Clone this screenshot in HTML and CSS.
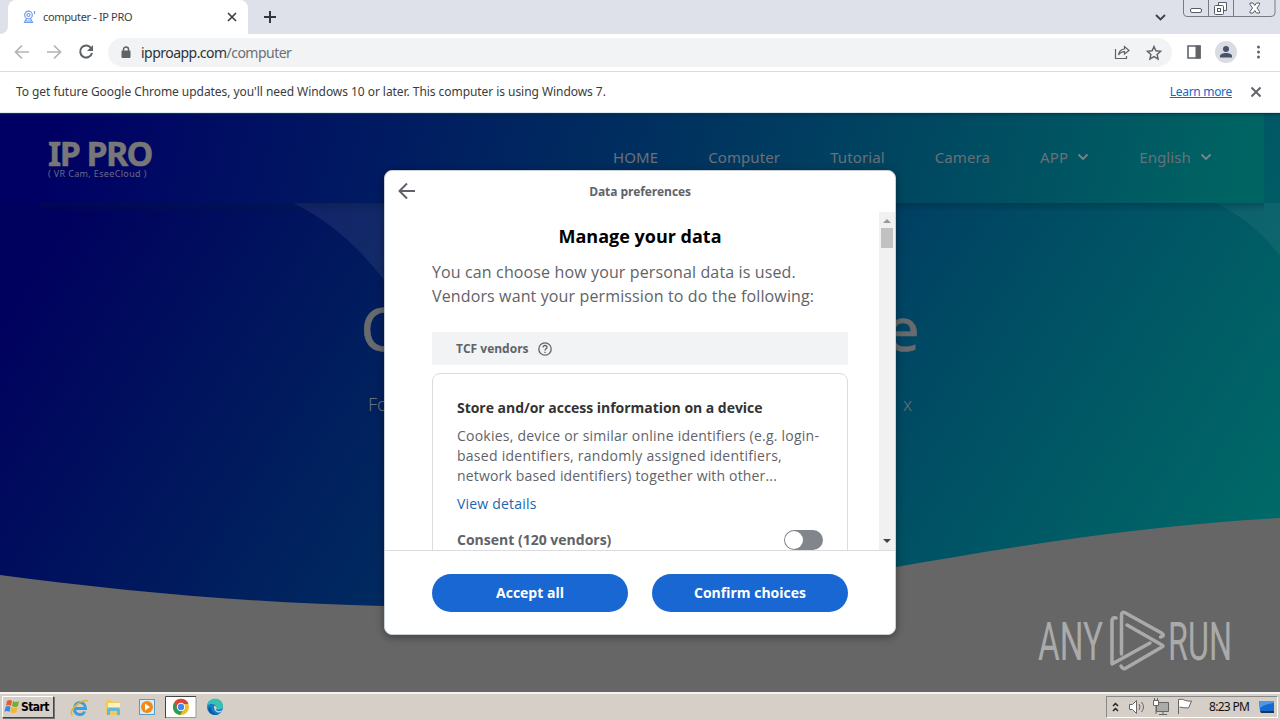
FILE: index.html
```html
<!DOCTYPE html>
<html lang="en">
<head>
<meta charset="utf-8">
<title>computer - IP PRO</title>
<link rel="stylesheet" href="styles.css">
</head>
<body>
<div class="desktop">
  <header class="tabstrip">
    <div class="strip-edge"></div>
    <div class="tab">
      <svg class="favicon" width="14" height="14" viewBox="0 0 14 14" fill="none" stroke="#6f9bea" stroke-width="1.2"><circle cx="6.500" cy="5" r="3.800"/><circle cx="6.500" cy="5" r="1.500"/><path d="M4.500 8.500 2.500 12.500h8L8.500 8.500M4 11h5M12.500 1v3"/></svg>
      <span class="tab-title">computer - IP PRO</span>
      <svg class="tab-close" width="10" height="10" viewBox="0 0 10 10" stroke="#3c4043" stroke-width="1.700"><path d="M1 1l8 8M9 1L1 9"/></svg>
    </div>
    <svg class="new-tab" width="12" height="12" viewBox="0 0 12 12" stroke="#33363a" stroke-width="2"><path d="M6 0v12M0 6h12"/></svg>
    <svg class="tab-search" width="11" height="7" viewBox="0 0 11 7" fill="none" stroke="#3c4043" stroke-width="1.800"><path d="M1 1l4.500 4.500L10 1"/></svg>
    <svg class="window-buttons" width="94" height="18" viewBox="0 0 94 18" fill="none" stroke="#777b85"><path d="M.5 0v13q0 3.500 3.500 3.500h84q4 0 4-3.500V0M25.500 0v16M50.500 0v16"/><g stroke="#555a64"><rect x="7.500" y="8.500" width="11" height="4" rx="1.500" fill="#fff"/><path d="M35.500 5V2.500h8v8H41" fill="#fff"/><rect x="31.500" y="5.500" width="9" height="9" rx="1" fill="#fff"/><rect x="34.500" y="8.500" width="3" height="3"/><path d="M67 3h3l1.800 2.500L73.500 3h3v1.500L74 8l2.500 3.500V13h-3l-1.700-2.500L70 13h-3v-1.500L69.500 8 67 4.500z" fill="#fff"/></g></svg>
  </header>
  <nav class="toolbar">
    <svg class="nav-icons" width="108" height="34" viewBox="0 0 108 34" fill="none" stroke="#b2b4b6" stroke-width="1.700"><path d="M29 18H16M22 11.500 15.500 18l6.500 6.500M47 18h13M54 11.500l6.500 6.500-6.500 6.500"/><path d="M91.200 14.200A6 6 0 1 0 92 19" stroke="#5f6368" stroke-width="2"/><path d="M93 11v6h-6z" fill="#5f6368" stroke="none"/></svg>
    <div class="omnibox">
      <svg width="10" height="13" viewBox="0 0 10 13"><path d="M2.500 5V3.500a2.500 2.500 0 0 1 5 0V5" fill="none" stroke="#5f6368" stroke-width="1.500"/><rect x=".5" y="4.500" width="9" height="7.500" rx="1" fill="#5f6368"/></svg>
      <span class="url">ipproapp.com<span class="url-path">/computer</span></span>
      <svg class="share" width="17" height="16" viewBox="0 0 17 16" fill="none" stroke="#5f6368" stroke-width="1.200"><path d="M1.500 5v9.500h11V12M4.500 11c.6-4 2.500-5.800 6-6V2.500L15 6.500 10.500 10V7.700C8 7.700 6 8.500 4.500 11z"/></svg>
      <svg width="16" height="16" viewBox="0 0 16 16" fill="none" stroke="#5f6368" stroke-width="1.400"><path d="m8 1.500 1.900 4.300 4.700.5-3.500 3.100 1 4.600L8 11.600 3.900 14l1-4.600L1.400 6.300l4.700-.5z"/></svg>
    </div>
    <svg class="panel-icons" width="108" height="34" viewBox="0 0 108 34"><path d="M16 12h12v12H16z" fill="none" stroke="#5f6368" stroke-width="1.600"/><path d="M23.500 11.500h5v13h-5z" fill="#5f6368"/><circle cx="54" cy="18" r="11" fill="#d9dce1"/><circle cx="54" cy="15" r="3" fill="#47536b"/><path d="M48 23.500V22c0-4 12-4 12 0v1.500z" fill="#47536b"/><g fill="#5f6368"><circle cx="86.500" cy="13" r="1.500"/><circle cx="86.500" cy="18" r="1.500"/><circle cx="86.500" cy="23" r="1.500"/></g></svg>
  </nav>
  <div class="infobar">
    <span class="info-text">To get future Google Chrome updates, you'll need Windows 10 or later. This computer is using Windows 7.</span>
    <a class="info-link">Learn more</a>
    <svg class="info-close" width="12" height="12" viewBox="0 0 12 12" stroke="#5f6368" stroke-width="1.900"><path d="M1.500 1.500l9 9M10.500 1.500l-9 9"/></svg>
  </div>

  <main class="page">
    <svg class="backdrop" width="1280" height="580" viewBox="0 113 1280 580">
      <defs>
        <linearGradient id="sea" gradientUnits="userSpaceOnUse" x1="60" y1="210" x2="1059" y2="834"><stop offset="0" stop-color="#00005e"/><stop offset=".25" stop-color="#001b5d"/><stop offset=".5" stop-color="#003462"/><stop offset=".75" stop-color="#005064"/><stop offset="1" stop-color="#006867"/></linearGradient>
        <linearGradient id="bar" gradientUnits="userSpaceOnUse" x1="60" y1="113" x2="1180" y2="400"><stop offset="0" stop-color="#000064"/><stop offset=".5" stop-color="#00305f"/><stop offset="1" stop-color="#006463"/></linearGradient>
        <linearGradient id="shade" x1="0" y1="0" x2="0" y2="1"><stop offset="0" stop-color="#002030" stop-opacity=".3"/><stop offset="1" stop-color="#002030" stop-opacity="0"/></linearGradient>
      </defs>
      <rect y="113" width="1280" height="580" fill="#666"/>
      <path d="M0 113H1280V518C1150 525 1020 545 896 567C760 590 590 610 384 606C250 603 120 591 0 575z" fill="url(#sea)"/>
      <path d="M293 203C328 220 358 246 384 280V203z" fill="#fff" fill-opacity=".07"/>
      <path d="M1216 203C1240 215 1262 232 1280 256V203z" fill="#fff" fill-opacity=".05"/>
      <rect y="113" width="1264" height="90" fill="url(#bar)"/>
      <rect x="40" y="203" width="1224" height="9" fill="url(#shade)"/>
      <rect y="113" width="1280" height="5" fill="url(#shade)"/>
      <path d="M0 113.500h1280" stroke="#203040"/>
    </svg>
    <div class="page-content">
      <div class="site-header">
        <div class="brand"><b class="brand-name">IP PRO</b><span class="brand-sub">( VR Cam, EseeCloud )</span></div>
        <div class="menu">
          <span>HOME</span><span>Computer</span><span>Tutorial</span><span>Camera</span>
          <span>APP<svg width="12" height="8" viewBox="0 0 12 8"><path d="M1.500 1.500 6 6l4.500-4.500"/></svg></span>
          <span>English<svg width="12" height="8" viewBox="0 0 12 8"><path d="M1.500 1.500 6 6l4.500-4.500"/></svg></span>
        </div>
      </div>
      <h1 class="hero-title">Computer Software</h1>
      <p class="hero-sub">For Windows 7 or later, and for computers running on Mac os x</p>
    </div>
    <svg class="watermark" width="210" height="84" viewBox="1030 600 210 84"><g class="mark-text"><text x="1038" y="660" textLength="65" lengthAdjust="spacingAndGlyphs">ANY</text><text x="1168" y="660" textLength="64" lengthAdjust="spacingAndGlyphs">RUN</text></g><g fill="none" stroke="#aaa" stroke-width="3.500" stroke-linecap="round" stroke-linejoin="round"><path d="M1116 618q-4-1-4 3v43l38-21M1121.500 654V615q0-4 4-2l36 20q4 3-1 4M1127 625l35 20q2 1 0 2l-36 21q-3 2-5-2"/></g></svg>
  </main>

  <footer class="taskbar">
    <div class="start"><svg width="17" height="16" viewBox="0 0 17 16"><path d="M3 2q3-2 5 0L7 7Q4 5 2 7z" fill="#e85a2a"/><path d="M9 2q3 2 6 0l-1 5q-3 2-6 0z" fill="#72ad35"/><path d="M1.500 8q3-2 5 0l-1 5q-3-2-5 0z" fill="#388bd8"/><path d="M7.500 8q3 2 6 0l-1 5q-3 2-6 0z" fill="#f4b72a"/></svg><b>Start</b></div>
    <svg class="launchers" width="176" height="24" viewBox="54 695 176 24">
      <path d="M74.500 708.500h11c0-8-11-8-11 0s9 7 10 3" fill="none" stroke="#3b9fdd" stroke-width="3"/><path d="M73 715c-7-1 8-18 15-14" fill="none" stroke="#e3b52c" stroke-width="1.500"/>
      <path d="M106 700h5l1 2h8v13h-14z" fill="#edc964"/><path d="M108 703h12v4h-12z" fill="#fff2b5"/><path d="M107 715v-5q0-2 2-2h9q2 0 2 2v5h-3v-4h-7v4z" fill="#66b8d8"/>
      <rect x="139.500" y="699.500" width="15" height="15" fill="#d8ebf7" stroke="#5a9bc5"/><circle cx="147" cy="707" r="6" fill="#f18a18"/><path d="M145 703.500v7l5-3.500z" fill="#fff"/>
      <path d="M165 696h31v22h-31z" fill="#fff"/><path d="M165.500 718v-21.500H196" fill="none" stroke="#444"/><path d="M196 697v20.500h-30" fill="none" stroke="#999"/>
      <circle cx="181" cy="707" r="8" fill="#eabf29"/><path d="M174 703a8 8 0 0 0 6 12l4-6-3-2z" fill="#2b9c50"/><path d="M174 703a8 8 0 0 1 14.500 1H181l-3 5z" fill="#db4437"/><circle cx="181" cy="707" r="4.200" fill="#fff"/><circle cx="181" cy="707" r="3.200" fill="#4285f4"/>
      <circle cx="215" cy="707" r="8" fill="#147cc8"/><path d="M207 706c1-9 15-10 16 0 0 4-5 4-7 3 2-4-5-7-9-3z" fill="#36c1b2"/><path d="M214 706c3 0 3 2 2 4 2 2 5 1 6.500 0-3 5-9 2-8.500-4z" fill="#d5cfc8"/><path d="M211 707c0 5 4 8 9 6-5 4-12 1-12-5z" fill="#075ca5"/>
    </svg>
    <div class="tray">
      <svg width="92" height="20" viewBox="1107 697 92 20" fill="none" stroke="#222"><path d="m1113 706 2.500-2.500 2.500 2.500M1113 711l2.500-2.500 2.500 2.500" stroke-width="1.500"/><g stroke="#666" fill="#fff"><path d="M1129.500 704.500h3l4-4v13l-4-4h-3z"/><path d="M1139 704q2 3 0 6M1141.500 702q4 5 0 10" fill="none"/><path d="M1156.500 702.500h12v9h-12z" fill="#aaa"/><path d="M1159 714.500h8M1163 712v2"/><path d="M1153.500 700.500h5v5h-5zM1154.500 698v2M1157.500 698v2M1156 706v8"/><path d="M1178.500 714v-14.500q4-1 7 1 3 1 6 .5l-3 7q-5 0-9-1" /></g></svg>
      <span class="clock">8:23 PM</span>
      <svg width="17" height="16" viewBox="0 0 17 16"><path d="M1 2h15v10H2z" fill="#1769cd"/><path d="M1 2h15v2Q7 5 2 9z" fill="#4b98e6"/><path d="M2 12h14v2H3z" fill="#17345a"/></svg>
    </div>
  </footer>

  <section class="dialog">
    <div class="dialog-head"><svg class="back" width="18" height="18" viewBox="0 0 18 18" fill="none" stroke="#5f6368" stroke-width="2"><path d="M17 9H2M9 1.500 1.500 9 9 16.500"/></svg><b class="dialog-title">Data preferences</b></div>
    <div class="dialog-body">
      <div class="scroll-content">
        <h2>Manage your data</h2>
        <p class="intro"><span>You can choose how your personal data is used.</span><br><span>Vendors want your permission to do the following:</span></p>
        <div class="vendors"><b>TCF vendors</b><svg width="14" height="14" viewBox="0 0 14 14" fill="none" stroke="#5f6368" stroke-width="1.300"><circle cx="7" cy="7" r="6.200"/><path d="M5 5.500C5 2.700 9 3 9 5.400 9 6.800 7 6.800 7 8.500M7 9.700V11"/></svg></div>
        <div class="purpose">
          <h3>Store and/or access information on a device</h3>
          <p class="description"><span class="l1">Cookies, device or similar online identifiers (e.g. login-</span><br><span class="l2">based identifiers, randomly assigned identifiers,</span><br><span class="l3">network based identifiers) together with other...</span></p>
          <a class="details">View details</a>
          <div class="consent"><b>Consent (120 vendors)</b><span class="switch"><i></i></span></div>
        </div>
      </div>
      <div class="scrollbar"><i class="arrow up"></i><i class="thumb"></i><i class="arrow down"></i></div>
    </div>
    <div class="actions"><button>Accept all</button><button>Confirm choices</button></div>
  </section>
</div>
</body>
</html>
```

FILE: styles.css
```css
* { box-sizing: border-box; }
body { margin: 0; overflow: hidden; font-family: "Noto Sans", sans-serif; }
svg { display: block; flex: none; }
.desktop { position: relative; width: 1280px; height: 720px; display: flex; flex-direction: column; overflow: hidden; background: #fff; }
.tabstrip { height: 34px; flex: none; display: flex; align-items: flex-start; background: #dee1e9; }
.strip-edge { width: 8px; height: 34px; background: radial-gradient(circle at 0 0, #dee1e9 7.500px, #fff 8.500px) 0 26px / 8px 8px no-repeat; }
.tab { width: 240px; height: 34px; background: #fff; border-radius: 8px 8px 0 0; display: flex; align-items: center; padding: 0 11px 0 14px; }
.tab-title { margin-left: 7px; padding-bottom: 2px; font-size: 11px; color: #3c4043; white-space: nowrap; letter-spacing: -.35px; }
.tab-close { margin-left: auto; }
.new-tab { margin: 11px 0 0 16px; }
.tab-search { margin: 14px 17px 0 auto; }
.window-buttons { margin-right: 3px; }
.toolbar { height: 38px; flex: none; display: flex; align-items: flex-start; border-bottom: 1px solid #dcdcde; }
.omnibox { width: 1064px; height: 29px; margin-top: 4px; border-radius: 15px; background: #f1f3f4; display: flex; align-items: center; padding: 0 10px 0 13px; }
.url { margin-left: 10px; font-size: 14px; color: #303236; letter-spacing: -.53px; white-space: nowrap; }
.url-path { color: #6c7074; }
.share { margin: 0 15px 1px auto; }
.infobar { height: 41px; flex: none; display: flex; align-items: center; padding: 0 18px 2px 16px; font-size: 12px; color: #3b3b3b; border-bottom: 1px solid #dceaf2; }
.info-text { white-space: nowrap; letter-spacing: -.055px; }
.info-link { margin: 0 18px 0 auto; color: #1967c2; text-decoration: underline; letter-spacing: -.3px; }
.info-close { margin-top: 1px; }
.page { position: relative; height: 579px; flex: none; overflow: hidden; }
.backdrop { position: absolute; inset: 0; }
.page-content { position: relative; color: #6b7078; text-align: center; }
.site-header { height: 90px; display: flex; justify-content: space-between; padding: 0 68px 0 48px; }
.brand { display: flex; flex-direction: column; align-items: flex-start; padding-top: 23px; color: #777; }
.brand-name { font-size: 34px; line-height: 35px; letter-spacing: -1.6px; -webkit-text-stroke: .5px #777; }
.brand-sub { font-size: 9px; line-height: 9px; letter-spacing: .35px; color: #6a6a85; margin-top: -2px; }
.menu { display: flex; gap: 50px; align-items: center; padding-bottom: 2px; font-size: 15px; white-space: nowrap; letter-spacing: .11px; }
.menu span { display: flex; align-items: center; gap: 9px; }
.menu path { fill: none; stroke: #7b8489; stroke-width: 1.800; }
.hero-title { font-size: 61px; line-height: 80px; font-weight: 400; margin: 85px 0 0; color: #686b6d; -webkit-text-stroke: .7px #686b6d; }
.hero-sub { width: 544px; font-size: 18px; line-height: 24px; margin: 24px auto 0; font-weight: 300; white-space: nowrap; text-align-last: justify; }
.watermark { position: absolute; left: 1030px; top: 487px; }
.mark-text { font-family: Roboto, sans-serif; font-size: 53px; font-weight: 400; fill: #aaa; }
.taskbar { height: 28px; flex: none; display: flex; align-items: center; padding: 0 0 1px 2px; background: #d5cfc8; border-top: 2px solid #f4f2ef; }
.start { width: 52px; height: 22px; display: flex; align-items: center; padding-left: 1px; border: 1px solid; border-color: #fff #444 #444 #fff; box-shadow: 1px 1px 0 #777; font: 12px "DejaVu Sans Condensed", "DejaVu Sans", sans-serif; letter-spacing: -.6px; }
.tray { height: 22px; margin-left: auto; width: 172px; margin-right: 2px; border: 1px solid; border-color: #888 #fff #fff #888; display: flex; align-items: center; }
.clock { width: 41px; margin: 0 8px 0 10px; font-size: 12px; white-space: nowrap; letter-spacing: -.7px; color: #111; }
.dialog { position: absolute; left: 384px; top: 170px; width: 512px; height: 465px; border: 1px solid #c9d0d5; border-radius: 8px; background: #fff; display: flex; flex-direction: column; overflow: hidden; font-family: "Open Sans", sans-serif; color: #5f6368; box-shadow: 0 2px 8px #0006; }
.dialog-head { height: 41px; flex: none; display: flex; align-items: center; padding-left: 13px; }
.back { margin-bottom: 1px; }
.dialog-title { width: 448px; text-align: center; font-size: 12px; letter-spacing: -.1px; }
.dialog-body { height: 338px; flex: none; display: flex; overflow: hidden; }
.scroll-content { width: 494px; padding: 10px 31px 0 47px; white-space: nowrap; }
.scroll-content h2 { margin: 0; font-size: 18px; line-height: 28px; text-align: center; color: #000; }
.intro { margin: 10px 0 0; font-size: 16px; line-height: 24px; letter-spacing: .13px; }
.vendors { height: 33px; margin-top: 24px; display: flex; align-items: center; gap: 9px; padding-left: 24px; background: #f1f3f4; font-size: 12px; }
.purpose { height: 300px; margin-top: 8px; padding: 24px; border: 1px solid #dadce0; border-radius: 8px; font-size: 14px; line-height: 20px; }
.purpose h3 { margin: 0; font-size: 14px; line-height: 20px; color: #333; letter-spacing: -.03px; }
.description { margin: 8px 0; }
.l1 { letter-spacing: .23px; }
.l2 { letter-spacing: .26px; }
.l3 { letter-spacing: .17px; }
.details { display: block; color: #1967b2; letter-spacing: .2px; }
.consent { display: flex; justify-content: space-between; align-items: center; margin-top: 16px; }
.switch { width: 39px; height: 20px; border-radius: 10px; background: #80868b; padding: 1px; }
.switch i { display: block; width: 18px; height: 18px; border-radius: 50%; background: #fff; }
.scrollbar { width: 16px; display: flex; flex-direction: column; align-items: center; background: #f1f1f1; }
.arrow { border: 4px solid transparent; }
.up { border-top: 0; border-bottom-color: #999; margin-top: 7px; }
.down { border-bottom: 0; border-top-color: #444; margin: auto 0 7px; }
.thumb { width: 12px; height: 20px; margin-top: 5px; background: #c1c1c1; }
.actions { height: 84px; border-top: 1px solid #dadce0; display: flex; gap: 24px; padding: 23px 47px; }
.actions button { width: 196px; height: 38px; border: 0; border-radius: 19px; color: #fff; background: #1967d2; font: bold 14px "Open Sans", sans-serif; padding: 0 6px 2px; }
```
